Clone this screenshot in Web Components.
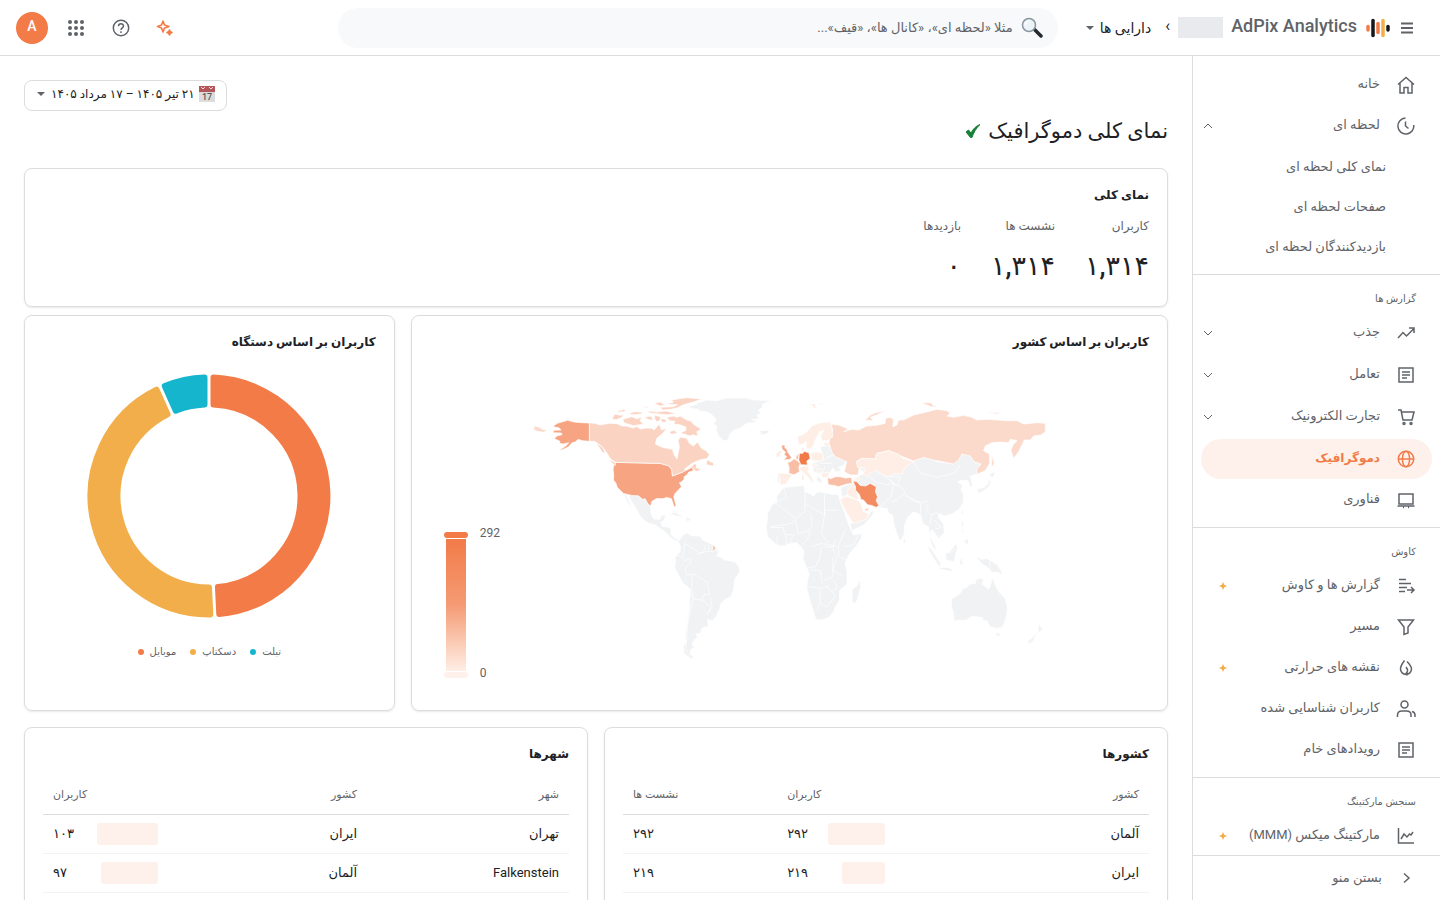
<!DOCTYPE html>
<html lang="fa" dir="rtl">
<head>
<meta charset="utf-8">
<meta name="viewport" content="width=device-width, initial-scale=1">
<title>AdPix Analytics</title>
<style>
:root{--ink:#202124;--muted:#5f6368;--line:#dadce0;--accent:#f27b48;--tint:#fef1eb;--gold:#f2ae4a;--teal:#14b5cd}
body{margin:0;background:#fff;color:var(--ink);font:13px/20px Roboto,"DejaVu Sans",sans-serif}
</style>
</head>
<body>
<app-shell>
  <app-header slot="header"></app-header>
  <side-nav slot="nav">
    <nav-item icon="home">خانه</nav-item>
    <nav-item icon="clock" chevron="up">لحظه ای</nav-item>
    <nav-item sub>نمای کلی لحظه ای</nav-item>
    <nav-item sub>صفحات لحظه ای</nav-item>
    <nav-item sub>بازدیدکنندگان لحظه ای</nav-item>
    <nav-section>گزارش ها</nav-section>
    <nav-item icon="trend" chevron="down">جذب</nav-item>
    <nav-item icon="doc" chevron="down">تعامل</nav-item>
    <nav-item icon="cart" chevron="down">تجارت الکترونیک</nav-item>
    <nav-item icon="globe" active>دموگرافیک</nav-item>
    <nav-item icon="laptop">فناوری</nav-item>
    <nav-section>کاوش</nav-section>
    <nav-item icon="explore" star>گزارش ها و کاوش</nav-item>
    <nav-item icon="funnel">مسیر</nav-item>
    <nav-item icon="flame" star>نقشه های حرارتی</nav-item>
    <nav-item icon="users">کاربران شناسایی شده</nav-item>
    <nav-item icon="doc">رویدادهای خام</nav-item>
    <nav-section>سنجش مارکتینگ</nav-section>
    <nav-item icon="chart" star>مارکتینگ میکس (MMM)</nav-item>
    <span slot="footer">بستن منو</span>
  </side-nav>
  <page-heading>نمای کلی دموگرافیک</page-heading>
  <card-grid>
    <panel-card span="12" heading="نمای کلی"><stat-row></stat-row></panel-card>
    <panel-card span="8" heading="کاربران بر اساس کشور"><geo-map></geo-map></panel-card>
    <panel-card span="4" heading="کاربران بر اساس دستگاه"><donut-chart></donut-chart></panel-card>
  </card-grid>
  <card-grid>
    <panel-card span="6" heading="کشورها" tall><data-table kind="countries"></data-table></panel-card>
    <panel-card span="6" heading="شهرها" tall><data-table kind="cities"></data-table></panel-card>
  </card-grid>
</app-shell>
<script>
const define = (name, html, after) => {
  const tpl = document.createElement('template');
  customElements.define(name, class extends HTMLElement {
    connectedCallback() {
      if (this.shadowRoot) return;
      const root = this.attachShadow({mode: 'open'});
      tpl.innerHTML = typeof html === 'function' ? html(this) : html;
      root.append(tpl.content.cloneNode(true));
      if (after) after(this, root);
    }
  });
};

const ICONS = {
  home: '<path d="M2 9.5 10 2.5l8 7M4 8v10h4v-5.5h4V18h4V8"/>',
  clock: '<path d="M9.500 2A8 8 0 1 0 17.800 9M9.500 5.500V10l3 2.500"/>',
  trend: '<path d="M2 15l5-5.5 3.5 3.5L18 5.5M13 5h5v5"/>',
  doc: '<path d="M3 3h14v14H3zM6 7h8M6 10h8M6 13h5"/>',
  cart: '<path d="M2 3h3l2 10h9l2-8H5.5"/><circle cx="8" cy="16.5" r="1"/><circle cx="15" cy="16.5" r="1"/>',
  globe: '<circle cx="10" cy="10" r="7.7"/><ellipse cx="10" cy="10" rx="3.6" ry="7.7"/><path d="M2 10h16"/>',
  laptop: '<path d="M3 4h14v10H3zM1.500 16h17M7 17.500h1M12 17.500h1"/>',
  explore: '<path d="M3 3.500h7M3 7.500h12M3 11.500h8M3 15.500h6M11 14h7M15 11l3 3-3 3"/>',
  funnel: '<path d="M2.500 3h15l-5.500 7v6l-4 1.500V10z"/>',
  flame: '<path d="M8.500 2.500C5 7 4.500 9 4.500 11a5.500 5.500 0 0 0 11 0c0-2.500-2-5-4.500-7.500M9 16.500c3.500-2.500 3-5 1-7.500M11 17.500v-3.500"/>',
  users: '<circle cx="8.500" cy="5.500" r="3.500"/><path d="M1.500 18v-2c0-2.500 2-4 4.500-4h4.500c2.500 0 4.500 1.500 4.500 4v2M16 12.500c2 .5 3 2 3 3.500v2"/>',
  chart: '<path d="M2.500 2v15H18M5 13l3-5 3 3 2.500-3 1.500 1 2-3"/>'
};
const icon = (name) => `<svg class="icon" viewBox="0 0 20 20" width="20" height="20" fill="none" stroke="currentColor" stroke-width="1.5" aria-hidden="true">${ICONS[name]}</svg>`;
const caret = '<svg class="caret" viewBox="0 0 8 4" width="8" height="4" aria-hidden="true"><path d="M0 0h8L4 4z" fill="#5f6368"/></svg>';

define('app-shell', `
<style>
:host{display:grid;grid-template:56px minmax(0,1fr)/248px minmax(0,1fr);height:100vh;overflow:hidden}
header{grid-column:1/-1}
main{overflow:hidden;padding:24px}
nav{min-height:0}
</style>
<header><slot name="header"></slot></header>
<nav><slot name="nav"></slot></nav>
<main><slot></slot></main>`);

define('app-header', `
<style>
:host{display:flex;align-items:center;height:55px;border-bottom:1px solid var(--line);padding:0 16px}
button{border:0;background:none;padding:0;margin:0;font:inherit;color:inherit;display:flex;align-items:center;justify-content:center}
.brand{flex:none;display:flex;align-items:center;margin-left:28px}
.menu{width:34px;height:40px}
.logo{margin-inline-end:9px}
.name{font-size:18px;font-weight:500;color:var(--muted);text-decoration:none;direction:ltr;padding-bottom:4px;white-space:nowrap}
.hold{width:45px;height:21px;background:#e8eaed;margin-inline-start:8px}
.crumb{margin-inline-start:8px;width:8px;font-size:16px;padding-bottom:4px}
.assets{gap:6px;margin-inline-start:11px;white-space:nowrap;font-size:14px}
.search{flex:0 1 720px;height:40px;border-radius:20px;background:#f8f9fb;display:flex;align-items:center;gap:8px;padding:0 15px;box-sizing:border-box}
input{flex:1;min-width:0;border:0;background:none;outline:0;font:inherit;padding:0;color:var(--ink)}
input::placeholder{color:var(--muted);opacity:1}
.tools{flex:1 0 auto;display:flex;align-items:center;justify-content:flex-end;gap:20px}
.tools button{width:24px;height:24px}
.tools .avatar{width:32px;height:32px;border-radius:50%;background:var(--accent);color:#fff;font-size:14px;font-weight:500;line-height:20px;padding-bottom:3px}
.tools .apps{margin:0 1px 0 -4px}
</style>
<div class="brand">
<button class="menu" aria-label="منو"><svg width="12" height="12" viewBox="0 0 12 12"><path d="M0 1.500h12M0 6h12M0 10.500h12" stroke="#5f6368" stroke-width="2"/></svg></button>
<svg class="logo" width="24" height="20" viewBox="0 0 24 20" stroke-linecap="round" stroke-width="3.500" fill="none"><path d="M2 8.500v3.500" stroke="#f27b48"/><path d="M7 2.500v15" stroke="#15171b"/><path d="M12 5.500v9" stroke="#f27b48"/><path d="M17 2.500v15" stroke="#f2ae4a"/><path d="M22 8.500v3.500" stroke="#15171b"/></svg>
<a class="name" href="#">AdPix Analytics</a>
<span class="hold"></span><span class="crumb">›</span>
<button class="assets"><span>دارایی ها</span>${caret}</button>
</div>
<label class="search">
<svg width="22" height="22" viewBox="0 0 22 22" aria-hidden="true"><path d="M13 12l7 7" stroke="#222a30" stroke-width="3.500" stroke-linecap="round"/><circle cx="8" cy="8" r="6.500" fill="#edf4f7" stroke="#88979f" stroke-width="1.500"/><path d="M4.500 8A4 4 0 0 1 8 4" stroke="#fff" stroke-width="1.500" fill="none"/></svg>
<input type="text" aria-label="جستجو" placeholder="مثلا «لحظه ای»، «کانال ها»، «قیف»...">
</label>
<div class="tools">
<button aria-label="دستیار"><svg width="18" height="18" viewBox="0 0 18 18" fill="none" stroke="#f27b48" stroke-width="1.600" stroke-linejoin="round"><path d="M7 2l1.500 4L13 7.500 8.500 9 7 13 5.500 9 1.500 7.500l4-1.500z"/><path d="M13.500 11l.8 1.700 1.700.8-1.700.8-.8 1.700-.8-1.700-1.700-.8 1.700-.8z" fill="#f27b48"/></svg></button>
<button aria-label="راهنما"><svg width="18" height="18" viewBox="0 0 18 18" fill="none" stroke="#5f6368" stroke-width="1.500"><circle cx="9" cy="9" r="7.700"/><path d="M6.500 7.200C6.500 4 11.500 4 11.500 7c0 1.800-2.500 1.900-2.500 4M9 12.300v1.600"/></svg></button>
<button class="apps" aria-label="برنامه ها"><svg width="16" height="16" viewBox="0 0 16 16" fill="#5f6368"><circle cx="2" cy="2" r="2"/><circle cx="8" cy="2" r="2"/><circle cx="14" cy="2" r="2"/><circle cx="2" cy="8" r="2"/><circle cx="8" cy="8" r="2"/><circle cx="14" cy="8" r="2"/><circle cx="2" cy="14" r="2"/><circle cx="8" cy="14" r="2"/><circle cx="14" cy="14" r="2"/></svg></button>
<button class="avatar">A</button>
</div>`);

define('side-nav', `
<style>
:host{display:flex;flex-direction:column;height:100%;border-left:1px solid var(--line);box-sizing:border-box}
.items{flex:1;min-height:0;overflow:hidden;padding-top:9px}
button{flex:none;display:flex;align-items:center;gap:14px;height:45px;border:0;border-top:1px solid var(--line);background:none;padding:0 24px;font:inherit;color:var(--muted)}
</style>
<div class="items"><slot></slot></div>
<button><svg width="20" height="20" viewBox="0 0 20 20" fill="none" stroke="#5f6368" stroke-width="1.500"><path d="M8 5.500l5 4.500-5 4.500"/></svg><slot name="footer"></slot></button>`);

define('nav-section', `
<style>
:host{display:block;height:38px;margin-top:7px;border-top:1px solid var(--line);color:var(--muted);font-size:10px;line-height:48px;padding-right:24px}
</style><slot></slot>`);

define('nav-item', (el) => `
<style>
:host{display:block;margin:0 8px 1px}
:host([chevron]){margin-bottom:2px}
:host([chevron=up]){margin-bottom:1px}
:host([sub]){margin-bottom:0}
a{display:flex;align-items:center;height:40px;border-radius:20px;padding:0 16px 0 2px;color:var(--muted);text-decoration:none}
.text{flex:1;white-space:nowrap;padding-bottom:2px}
.icon{margin-left:16px;flex:none}
:host([sub]) a{padding-right:46px}
:host([sub]) .text{padding-bottom:0}
:host([active]) a{background:var(--tint);color:var(--accent);font-size:12px;font-weight:700}
:host([star]) a{padding-left:18px}
</style>
<a href="#">${el.hasAttribute('icon') ? icon(el.getAttribute('icon')) : ''}<span class="text"><slot></slot></span>
${el.hasAttribute('chevron') ? `<svg width="10" height="6" viewBox="0 0 10 6" fill="none" stroke="#5f6368"><path d="${el.getAttribute('chevron') === 'up' ? 'M1 5l4-4 4 4' : 'M1 1l4 4 4-4'}"/></svg>` : ''}
${el.hasAttribute('star') ? '<svg width="8" height="8" viewBox="0 0 8 8" fill="#f2ae4a"><path d="M4 0l1.200 2.800L8 4 5.200 5.200 4 8 2.800 5.200 0 4l2.800-1.200z"/></svg>' : ''}</a>`);

define('page-heading', `
<style>
:host{display:flex;flex-direction:column}
button{align-self:flex-end;display:flex;align-items:center;height:31px;border:1px solid var(--line);border-radius:8px;background:#fff;padding:0 11px 3px 12px;font:12px/20px Roboto,"DejaVu Sans",sans-serif;color:var(--ink);white-space:nowrap}
.cal{margin-left:4px}
.caret{margin-right:6px}
h1{display:flex;align-items:center;gap:8px;margin:4px 0 0;height:32px;font-size:21px;font-weight:400;line-height:32px}
</style>
<button><svg class="cal" width="16" height="16" viewBox="0 0 16 16"><path d="M0 5h16v11H0z" fill="#dcdcdc"/><path d="M0 0h16v6H0z" fill="#b5575a"/><path d="M2 1l2 2 2-2M10 1l2 2 2-2" stroke="#f0dada" fill="none"/><text x="8" y="14" font-size="9" font-family="Roboto" font-weight="500" text-anchor="middle" fill="#555" direction="ltr">17</text></svg><span>۲۱ تیر ۱۴۰۵ – ۱۷ مرداد ۱۴۰۵</span>${caret}</button>
<h1><slot></slot><svg width="14" height="14" viewBox="0 0 14 14"><path d="M0 8l2.500-2L5 9c2-4 5-7 9-8.500C10 4.500 7.500 8.500 6 13.500H4.500z" fill="#188038" stroke="#188038"/></svg></h1>`);

define('card-grid', `
<style>
:host{display:grid;grid-template-columns:repeat(12,minmax(0,1fr));gap:8px 16px;margin-top:16px}
:host(:first-of-type){margin-top:21px}
</style><slot></slot>`);

define('panel-card', (el) => `
<style>
:host{display:block;box-sizing:border-box;border:1px solid var(--line);border-radius:8px;padding:16px 18px;box-shadow:0 1px 2px rgba(60,64,67,.12);grid-column:span ${el.getAttribute('span')}}
:host([tall]){min-height:460px}
h2{margin:0;font-size:12px;font-weight:700;line-height:20px}
</style><h2>${el.getAttribute('heading')}</h2><slot></slot>`);

define('stat-row', `
<style>
:host{display:flex;height:85px}
dl{display:grid;grid-template-columns:repeat(3,62px);gap:32px;margin:10px 0 0}
div{white-space:nowrap}
dt{font-size:12px;line-height:22px;color:var(--muted)}
dd{margin:11px 0 0;font-size:27px;font-weight:500;line-height:36px}
</style>
<dl><div><dt>کاربران</dt><dd>۱,۳۱۴</dd></div><div><dt>نشست ها</dt><dd>۱,۳۱۴</dd></div><div><dt>بازدیدها</dt><dd>۰</dd></div></dl>`);

/* Outlines are drawn in units of a third of a pixel; the eastern half has its own origin. */
const W = (fill, d) => `<path fill="${fill}" d="${d}"/>`;
const WEST =
 W('#f0f2f4', 'M562 80 590 72 565 78 620 60 650 62 680 54 740 54 760 60 815 62 795 68 785 75 788 82 775 90 783 100 770 105 776 117 757 118 772 126 740 130 720 145 700 150 688 165 685 180 670 182 655 168 648 150 652 140 640 132 648 120 636 104 620 95 590 93 598 88 580 86ZM773 155l12-3 16-2 8 6-16 8-18-2 8-4ZM384 345 415 347 428 358 435 356 444 372 452 378 452 400 462 417 480 418 484 406 497 405 492 420 482 428 486 440 500 440 513 446 512 462 525 476 536 476 532 482 525 481 508 470 498 458 478 444 466 434 450 431 430 420 418 404 405 380 392 360ZM370 342 378 345 388 365 398 388 385 372ZM508 400 525 396 549 411 530 408ZM557 412l8 2 10 6-16 4Z') +
 W('#f0f2f4', 'M534 484 550 464 562 458 572 466 585 468 600 468 608 480 620 486 630 490 645 496 655 515 650 528 665 532 672 540 690 542 704 546 715 558 720 572 715 582 705 595 702 612 700 630 692 650 675 658 662 670 660 685 655 692 650 705 638 722 622 718 625 738 605 744 602 758 588 762 592 772 580 782 575 795 584 798 570 812 572 824 584 836 570 834 552 820 550 800 558 785 556 760 563 720 568 680 571 627 548 608 535 585 523 560 527 548 525 532 540 515 542 500Z') +
 '<path fill="none" d="M525 522l20 8 10 12 16-8 0 14 -16 16 4 20 14 0 12-2 14 12 22 12 8 36-16 2-8 16-24-4-6-29 2-44M571 640l8 16-14 60-4 40-4 50 10 20M601 653l32 30-12 20M632 655l4 26-16 22M548 530l6-40M554 490l20 14 16 6 4 12 18-8 4-20M600 518l24-4 8 0 18-4M625 495v20"/>' +
 W('#f6a481', 'M161 137 172 130 185 126 203 121 222 126 245 128 268 129 268 184 248 182 234 178 226 186 216 188 206 200 190 208 176 212 198 197 206 188 190 192 178 190 180 184 163 176 170 168 186 164 184 159 160 158 160 151 183 150 178 144 161 140ZM346 247 480 250 505 257 515 268 517 288 550 275 575 258 580 272 566 276 560 285 552 290 552 297 545 305 538 308 544 320 525 340 521 350 528 378 522 380 514 356 500 352 488 356 470 355 455 364 452 378 444 372 435 356 428 358 415 347 395 346 370 340 352 322 347 308 340 300 341 284 339 268 342 252Z') +
 W('#fbdacb', 'M102 137 118 142 126 147 140 151 132 157 112 154 102 150Z') +
 W('#fad3c2', 'M268 129 285 130 300 135 328 130 352 131 365 138 378 138 400 144 410 139 420 147 440 144 455 145 462 150 478 132 484 150 500 145 488 160 470 175 466 192 482 200 500 205 517 208 522 225 531 237 535 215 538 200 534 182 540 171 560 175 568 190 580 198 592 186 604 205 618 212 628 224 620 236 600 239 575 250 552 268 560 270 574 260 582 252 590 252 588 262 604 268 588 275 575 262 550 275 517 288 515 268 505 257 480 250 346 247 330 235 318 215 306 200 284 184 268 184ZM622 238 632 246 640 248 640 258 618 254ZM500 112 520 108 532 112 540 108 560 120 574 124 580 133 603 148 590 155 594 168 578 164 570 168 540 158 556 152 558 142 540 134 520 132 525 124 508 122ZM368 118 395 110 410 116 425 112 420 122 430 132 400 137 372 128ZM338 112 345 102 360 106 370 104 366 112 352 118 338 119ZM488 90 480 82 520 80 532 74 500 72 520 66 514 60 545 55 560 53 605 57 580 66 550 74 530 84 512 88ZM350 95l22-7 5 6-20 3ZM384 101l20-6 24 2-5 5-25 2ZM440 92l30 4 28-3 32 8-30 3-50-5ZM425 78l18 2-3 4ZM462 70l20-4 6 6 12 3-20 3ZM432 112l20-4 8 12-14-1ZM464 106l18 4-2 10-10 6-6-10ZM480 115l20 4-4 8-10 0ZM508 155l14-4 10 8-18 4ZM288 188l20 14 8 18-10-4-10-16ZM328 238l18 10 0 8-12-8Z') +
 W('#f8bfa6', 'M638 495l9 8-5 10-4-2ZM204 411l3 2-2 3Z');
const EAST =
 W('#f0f2f4', 'M40 322 60 320 100 316 104 326 102 335 118 340 130 348 142 336 155 336 180 342 205 344 208 358 224 400 232 425 242 448 250 465 275 460 274 472 260 495 235 525 225 550 230 575 230 612 208 632 208 660 195 680 190 695 175 712 160 718 140 720 134 708 128 690 118 655 110 625 112 600 118 580 108 560 98 535 102 515 92 500 80 488 60 490 42 498 22 496 5 482 -8 468 -12 440 -8 420 -8 400 5 375 20 366 20 348ZM270 598 272 620 258 668 246 668 246 630 262 615Z') +
 W('#f0f2f4', 'M150 200 175 195 195 230 230 242 222 255 205 262 215 272 196 276 188 264 178 280 150 282 130 275 125 250 160 240ZM155 310 140 302 140 285 155 300ZM22 282l8 0-2 26-6 0ZM212 322 248 308 250 300 270 285 286 280 262 262 430 242 460 232 485 237 500 245 550 252 575 222 600 222 612 245 630 250 622 282 600 288 606 310 605 322 598 318 594 302 575 300 562 306 578 316 572 328 580 345 578 370 565 388 548 400 525 408 505 400 504 412 520 432 522 458 505 475 495 460 485 448 480 455 480 470 495 498 498 515 486 498 480 480 475 440 458 432 452 405 430 395 412 412 402 438 402 460 392 482 385 475 370 430 368 405 355 400 352 386 320 380 295 350 240 340 215 352ZM240 430 290 415 300 395 312 392 306 408 280 435 245 452Z') +
 '<path fill="none" d="M40 322l8 28-30 18-18 0M18 370l58 45-10 14-30 6-34 4M76 415l28-20 0-55M104 370l60 35 0-15 40 0M163 342v60M164 400l-10 60 20 30M76 420l8 40 30-6 12-20-4-34M0 442l38 0 6 22 30 0M22 496l-2-30M48 496l0-30M60 490l8-24M92 500l20-24 10-26M122 500l32-10 50 10 20-50M154 500l-4 30-14 30-26 4M184 500l16 30-12 40 30 20M205 500l0 30 26 10M160 500l30 0 6-22M115 620l40 4 20-6M120 570l30 0 6 40M150 625v45l-10 20M150 670l20 10 25-30M170 620l28 30M190 600l12 22-20 14M188 530v60l-28 10M220 500l30-6 16-30M340 260M430 245l20 35 50 12 50-12 20-26M320 278l40 12 30 0-6 24 20 20 0 10 40 24 30-4M360 300l20 20M290 282l30 26 30 6 20-6M370 310l-8 40-30 30M400 340l-16 18-20 8M405 345l30 20 16 0M452 370l-2 30M475 370l-6 20 14 14 20-6M484 404l-4 30M492 420l20 22-16 4M200 225l-25 4M160 240l20-12M150 250l35 0M155 280l10-20M340 285l24 20 22 14"/>' +
 W('#f0f2f4', 'M620 325 640 324 652 312 656 300 662 304 656 320 640 332 625 340ZM658 285l6-8 12 2-10 15ZM572 400l6-14 2 16ZM574 420l6 10-4 18 8 12-10-6ZM580 482l12-6 4 8-6 10ZM400 472l6 10-3 8-4-2ZM468 495 485 508 498 530 512 550 508 560 490 535ZM508 562l24 0 18 8-6 4-36-8ZM525 520 538 515 558 490 562 505 556 520 552 545 528 540ZM570 535l16-4-12 8 6 14-12 0ZM618 530 635 538 650 535 682 555 700 585 680 576 665 578 650 560 635 552ZM545 655 570 640 578 625 590 622 600 612 615 610 618 598 630 594 640 598 636 612 655 628 662 612 665 592 672 605 680 625 690 640 705 655 712 685 708 710 698 740 680 745 660 740 648 720 640 724 636 712 605 708 588 720 562 720 552 724 550 700 543 680ZM677 758l14 2-5 10-7-2ZM805 728l6 12 7 4-10 14-4-6ZM800 760 790 780 780 790 770 786Z') +
 '<path fill="none" d="M659 540v34M525 520l18-4 14-12"/>' +
 W('#fbdacb', 'M180 165 188 150 182 132 205 135 230 145 232 150 220 155 245 148 265 150 290 138 320 136 345 130 346 115 360 112 370 118 368 140 380 135 385 120 400 120 430 105 460 98 500 88 530 92 540 100 530 108 550 112 580 106 605 112 620 120 650 118 680 120 710 122 740 122 760 132 800 128 825 130 825 155 812 165 790 168 780 180 762 180 755 195 745 215 730 235 722 210 728 195 740 182 720 178 715 188 690 186 665 188 645 198 640 212 658 222 658 250 645 272 622 282 618 270 632 252 612 245 600 228 575 222 565 240 550 252 500 242 460 232 430 243 385 225 355 212 320 220 315 237 275 235 258 245 268 255 264 285 240 285 222 275 230 245 195 230 185 215 176 190ZM285 120 300 106 315 98 348 92 318 105 300 112 310 122ZM664 220l6 25 2 6-8 10ZM452 68l30 0 6 8 20 4-25 0-20-8ZM645 97l50 2-18 3Z') +
 W('#feeee5', 'M258 245 275 235 315 237 320 220 355 212 385 222 400 236 430 245 405 262 395 282 368 282 356 290 340 285 320 272 300 278 292 290 280 282 285 264 262 262ZM85 195 82 170 95 165 110 155 125 138 150 128 180 125 185 145 188 170 170 182 155 182 152 165 162 150 148 155 135 180 128 200 115 208 108 205 108 184 98 192ZM160 188l16 0 2 8-14 2ZM92 208l8-8 2 10-4 6ZM122 220l20-4 16 4 0 20-10 4-24-4ZM85 262 100 258 112 256 118 268 112 272 122 288 130 300 126 306 108 285 92 272ZM126 250l20 6-18 8ZM140 266l12 0 0 18-10-8ZM152 280l24-4 0 14-18 4ZM22 279 50 280 68 284 56 298 48 312 30 315 28 290ZM18 220l10-8 4 6-2 12-12 2ZM110 72l30 0-6 6 8 4-10 4-6-10ZM140 70l30 0-20 4ZM232 345 210 360 225 392 248 428 268 425 290 415 296 400 280 395 270 365ZM232 330 248 312 262 340 266 360 230 350ZM250 292l18 2 0 8-14-4ZM117 304l10 1-2 6Z') +
 W('#f8bfa6', 'M52 248 62 244 72 236 82 242 90 250 86 262 88 275 72 284 56 280 57 262ZM97 284l3 0 0 16-4 0ZM172 292 182 296 195 290 210 290 225 294 244 292 246 310 230 312 220 315 205 320 192 316 174 314ZM280 390l16-8-4 10ZM78 228l9-8-2 18-8 0Z') +
 W('#f6a888', 'M34 195 45 196 44 204 50 206 52 215 64 232 58 238 40 240 50 230 42 224 46 216 36 208ZM28 212l6 3-4 4Z') +
 W('#f17b48', 'M88 220 98 220 102 214 116 218 120 235 110 243 112 255 92 254 86 240Z') +
 W('#f38d61', 'M248 302 260 305 270 316 286 318 300 310 318 320 316 336 322 350 318 362 326 376 318 382 304 376 292 374 280 360 272 358 268 344 256 330 256 320Z');

define('geo-map', `
<style>
:host{display:grid;grid-template-columns:70px minmax(0,1fr) 70px;direction:ltr;padding-top:28px;height:314px}
.scale{display:flex;gap:12px;padding:146px 0 0 14px;align-items:flex-start;color:#5f6368;font:12px/14px Roboto,sans-serif}
.bar{display:flex;flex-direction:column;align-items:center;gap:1px;padding-top:6px}
.cap{width:24px;height:6px;border-radius:3px}
.fill{width:20px;height:132px;background:linear-gradient(#f27b48,#f59b74 50%,#feeee5)}
.nums{display:flex;flex-direction:column;justify-content:space-between;height:154px}
svg{display:block;width:100%}
</style>
<div class="scale"><div class="bar"><i class="cap" style="background:#f27b48"></i><i class="fill"></i><i class="cap" style="background:#fef1eb"></i></div><div class="nums"><span>292</span><span>0</span></div></div>
<svg viewBox="0 0 1737 870" role="img" aria-label="نقشه" stroke="#fff" stroke-width="2" stroke-linejoin="round">${WEST}<g transform="translate(810)">${EAST}</g></svg>`);

define('donut-chart', `
<style>
:host{display:block;direction:ltr}
svg{display:block;margin:20px auto 0;width:244px;height:248px}
ul{display:flex;justify-content:center;gap:14px;list-style:none;margin:22px 0 0;padding:0;font-size:10px;line-height:20px;color:var(--muted)}
li{display:flex;align-items:center;gap:6px}
i{width:6px;height:6px;border-radius:50%}
</style>
<svg viewBox="-122 -124 244 248" role="img" aria-label="کاربران بر اساس دستگاه"></svg>
<ul><li><i style="background:var(--accent)"></i>موبایل</li><li><i style="background:var(--gold)"></i>دسکتاپ</li><li><i style="background:var(--teal)"></i>تبلت</li></ul>`,
(el, root) => {
  const r = 3, outer = 121.5 - r, inner = 88.5 + r, off = 1.5 + r, rad = Math.PI / 180;
  const pt = (R, a) => `${(R * Math.sin(a)).toFixed(2)} ${(-R * Math.cos(a)).toFixed(2)}`;
  root.querySelector('svg').innerHTML = [[0, 177.2, '#f27b48'], [177.2, 335.9, '#f2ae4a'], [335.9, 360, '#14b5cd']].map(([a, b, c]) => {
    const o = Math.asin(off / outer), i = Math.asin(off / inner), s = a * rad, e = b * rad;
    return `<path fill="${c}" stroke="${c}" stroke-width="${2 * r}" stroke-linejoin="round" d="M${pt(outer, s + o)}A${outer} ${outer} 0 0 1 ${pt(outer, e - o)}L${pt(inner, e - i)}A${inner} ${inner} 0 0 0 ${pt(inner, s + i)}Z"/>`;
  }).join('');
});

const TABLES = {
  countries: {cols: [48.3, 22.4, 29.3], head: ['کشور', 'کاربران', 'نشست ها'], rows: [['آلمان', ['۲۹۲', 57], '۲۹۲'], ['ایران', ['۲۱۹', 43], '۲۱۹']]},
  cities: {cols: [38.4, 37.8, 23.8], head: ['شهر', 'کشور', 'کاربران'], rows: [['تهران', 'ایران', ['۱۰۳', 61]], ['Falkenstein', 'آلمان', ['۹۷', 57]]]}
};
define('data-table', (el) => {
  const t = TABLES[el.getAttribute('kind')];
  const last = (i) => (t === TABLES.countries ? i > 0 : i > 1) ? ' class="end"' : '';
  return `
<style>
:host{display:block;padding-top:11px}
table{width:100%;border-collapse:collapse;table-layout:fixed}
th,td{padding:0 10px;text-align:right;height:38px;border-bottom:1px solid #f1f3f4;white-space:nowrap}
th{height:39px;font-size:11px;font-weight:500;color:var(--muted);border-color:var(--line)}
th.end,td.end{text-align:left}
.val{display:flex;justify-content:space-between;align-items:center}
.val i{height:22px;border-radius:3px;background:var(--tint)}
</style>
<table><colgroup>${t.cols.map(c => `<col style="width:${c}%">`).join('')}</colgroup>
<thead><tr>${t.head.map((h, i) => `<th scope="col"${last(i)}>${h}</th>`).join('')}</tr></thead>
<tbody>${t.rows.map(r => `<tr>${r.map((c, i) => `<td${last(i)}>${Array.isArray(c) ? `<div class="val"><i style="width:${c[1]}px"></i>${c[0]}</div>` : c}</td>`).join('')}</tr>`).join('')}</tbody></table>`;
});
</script>
</body>
</html>
